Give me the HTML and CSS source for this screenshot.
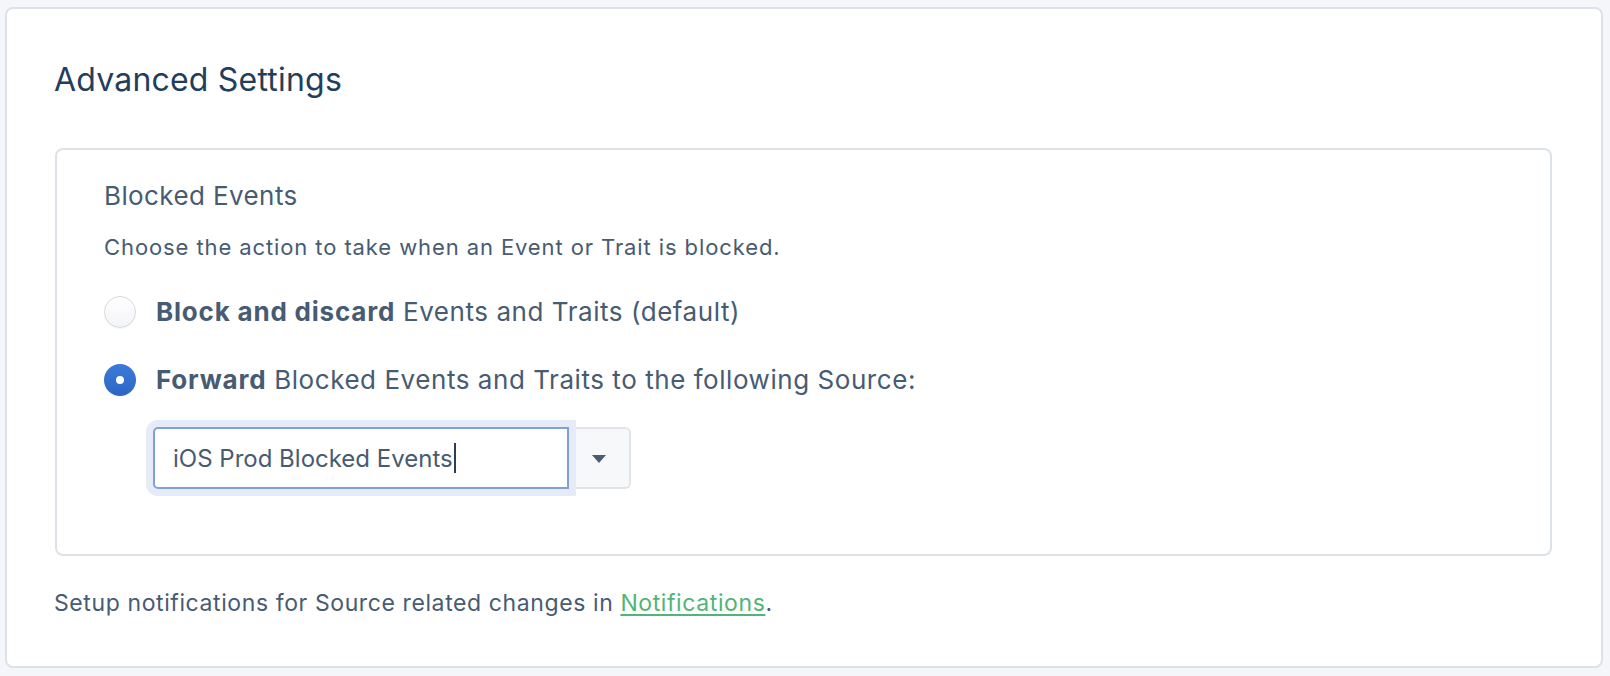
FILE: index.html
```html
<!DOCTYPE html>
<html lang="en">
<head>
<meta charset="utf-8">
<title>Advanced Settings</title>
<link rel="stylesheet" href="styles.css">
</head>
<body>
<section class="card">
  <h2 class="card-title">Advanced Settings</h2>
  <div class="panel">
    <h3 class="panel-title">Blocked Events</h3>
    <p class="panel-desc">Choose the action to take when an Event or Trait is blocked.</p>
    <label class="radio-row">
      <span class="radio"></span>
      <span class="radio-label"><b>Block and discard</b> Events and Traits (default)</span>
    </label>
    <label class="radio-row">
      <span class="radio radio-checked"></span>
      <span class="radio-label"><b>Forward</b> Blocked Events and Traits to the following Source:</span>
    </label>
    <div class="select">
      <div class="select-input">iOS Prod Blocked Events<span class="caret-cursor"></span></div>
      <div class="select-button"><span class="triangle"></span></div>
    </div>
  </div>
  <p class="footer-note">Setup notifications for Source related changes in <a class="link" href="#">Notifications</a>.</p>
</section>
</body>
</html>
```

FILE: styles.css
```css
html, body {
  margin: 0;
  padding: 0;
}
body {
  background: #f4f6f9;
  font-family: Inter, "Noto Sans", sans-serif;
  color: #475b72;
  padding: 7px 7px 0 5px;
}
.card {
  box-sizing: border-box;
  height: 661px;
  background: #fff;
  border: 2px solid #dde2ea;
  border-radius: 8px;
  padding: 51px 49px 0 47px;
}
.card-title {
  margin: 0;
  font-size: 32px;
  line-height: 40px;
  font-weight: 400;
  letter-spacing: 0.2px;
  color: #233e5c;
}
.panel {
  box-sizing: border-box;
  margin: 48px 0 0 1px;
  border: 2px solid #dde2ea;
  border-radius: 8px;
  padding: 30px 48px 65px 47px;
}
.panel-title {
  margin: 0;
  font-size: 26px;
  line-height: 32px;
  font-weight: 400;
  letter-spacing: 0.4px;
}
.panel-desc {
  margin: 21px 0 0;
  font-size: 22px;
  line-height: 28px;
  letter-spacing: 0.9px;
}
.radio-row {
  display: flex;
  align-items: center;
  gap: 20px;
  margin-top: 35px;
}
.radio-row + .radio-row {
  margin-top: 36px;
}
.radio {
  box-sizing: border-box;
  width: 32px;
  height: 32px;
  flex: none;
  border-radius: 50%;
  border: 1.5px solid #d6dae0;
  background: linear-gradient(#fff, #f3f4f6);
  box-shadow: 0 1px 1px rgba(0,0,0,0.04);
}
.radio-checked {
  border: none;
  background: linear-gradient(#3b7bd8, #2c66c6);
  display: flex;
  align-items: center;
  justify-content: center;
}
.radio-checked::after {
  content: "";
  width: 8px;
  height: 8px;
  border-radius: 50%;
  background: #fff;
}
.radio-label {
  font-size: 26px;
  line-height: 32px;
  letter-spacing: 0.55px;
}
.radio-label b {
  font-weight: 700;
  letter-spacing: 0.8px;
}
.select {
  display: flex;
  margin: 31px 0 0 49px;
  height: 62px;
}
.select-input {
  box-sizing: border-box;
  position: relative;
  z-index: 1;
  width: 416px;
  display: flex;
  align-items: center;
  padding: 0 0 0 18px;
  font-size: 24px;
  letter-spacing: 0;
  border: 2px solid #7fa1d8;
  border-radius: 5px 0 0 5px;
  background: #fff;
  box-shadow: 0 0 0 7px #e5ecf8;
}
.caret-cursor {
  display: inline-block;
  width: 2px;
  height: 30px;
  background: #2b3e55;
  margin-left: 1px;
}
.select-button {
  box-sizing: border-box;
  width: 62px;
  display: flex;
  align-items: center;
  justify-content: center;
  background: #f7f8fa;
  border: 2px solid #e1e5ea;
  border-left: none;
  border-radius: 0 6px 6px 0;
}
.triangle {
  width: 0;
  height: 0;
  border-left: 7.5px solid transparent;
  border-right: 7.5px solid transparent;
  border-top: 8px solid #4b5d72;
  margin-top: 1px;
}
.footer-note {
  margin: 33px 0 0;
  font-size: 23px;
  line-height: 28px;
  letter-spacing: 0.6px;
}
.link {
  color: #52b476;
  text-decoration: underline;
  text-underline-offset: 3px;
}
```
